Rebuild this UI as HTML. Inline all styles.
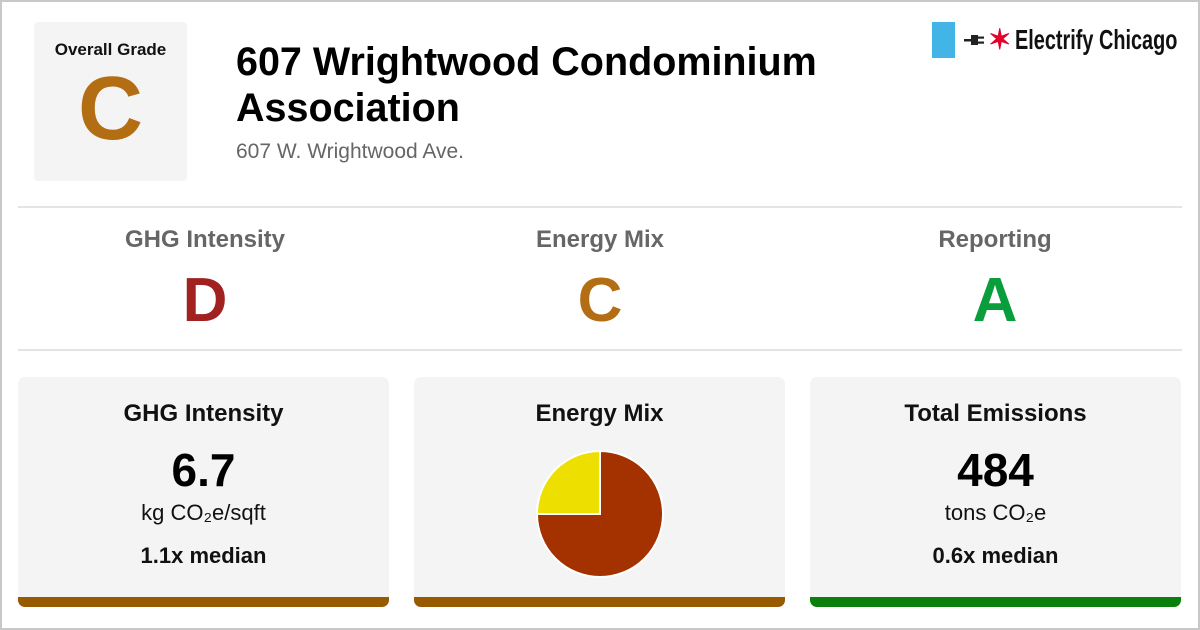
<!DOCTYPE html>
<html><head><style>
*{margin:0;padding:0;box-sizing:border-box}
body{width:1200px;height:630px;background:#fff;font-family:"Liberation Sans",Arial,sans-serif;position:relative;overflow:hidden}
.frame{position:absolute;left:0;top:0;width:1200px;height:630px;border:2px solid #c8c8c8}
.og{position:absolute;left:34px;top:22px;width:153px;height:159px;background:#f4f4f4;border-radius:4px;text-align:center}
.og .t{font-weight:bold;font-size:17px;margin-top:18px;color:#111}
.og .g{font-weight:bold;font-size:90px;color:#b36d12;line-height:90px;margin-top:4px}
h1{position:absolute;left:236px;top:39px;font-size:39.5px;line-height:46px;font-weight:bold;color:#000;width:660px}
.addr{position:absolute;left:236px;top:140px;font-size:21px;color:#666}
.logo{position:absolute;left:932px;top:22px;height:36px;display:flex;align-items:center}
.hr{position:absolute;left:18px;width:1164px;height:2px;background:#e4e4e4}
.gr{position:absolute;top:226px;width:300px;text-align:center}
.gr .t{font-size:24px;font-weight:bold;color:#666}
.gr .g{font-size:62px;font-weight:bold;line-height:70px;margin-top:12px}
.card{position:absolute;top:377px;width:371px;height:230px;background:#f4f4f4;border-radius:7px;overflow:hidden;text-align:center}
.card .bar{position:absolute;left:0;bottom:0;width:100%;height:10px}
.card .t{font-size:24px;font-weight:bold;margin-top:23px;color:#111}
.card .v{font-size:46px;font-weight:bold;line-height:50px;margin-top:17px}
.card .u{font-size:22px;color:#111;margin-top:5px}
.card .m{font-size:22px;font-weight:bold;color:#111;margin-top:17px}
</style></head><body>
<div class="frame"></div>
<div class="og"><div class="t">Overall Grade</div><div class="g">C</div></div>
<h1>607 Wrightwood Condominium Association</h1>
<div class="addr">607 W. Wrightwood Ave.</div>
<div class="logo">
<div style="width:23px;height:36px;background:#41b6e6"></div>
<svg width="26" height="16" viewBox="0 0 26 16" style="margin-left:9px"><rect x="0" y="7" width="8" height="2.5" fill="#222"/><path d="M7 3 h7 v10 h-7z" fill="#222"/><rect x="14" y="4.5" width="6" height="2.2" fill="#222"/><rect x="14" y="9.5" width="6" height="2.2" fill="#222"/></svg>
<span style="color:#e4002b;font-size:28px;line-height:26px;margin-left:-2px;font-weight:bold">✶</span>
<span style="font-size:28px;font-weight:bold;color:#111;margin-left:4px;transform:scaleX(0.71);transform-origin:left;display:inline-block;white-space:nowrap">Electrify Chicago</span>
</div>
<div class="hr" style="top:206px"></div>
<div class="hr" style="top:349px"></div>
<div class="gr" style="left:55px"><div class="t">GHG Intensity</div><div class="g" style="color:#a12121">D</div></div>
<div class="gr" style="left:450px"><div class="t">Energy Mix</div><div class="g" style="color:#b36d12">C</div></div>
<div class="gr" style="left:845px"><div class="t">Reporting</div><div class="g" style="color:#0a9d3c">A</div></div>
<div class="card" style="left:18px"><div class="t">GHG Intensity</div><div class="v">6.7</div><div class="u">kg CO₂e/sqft</div><div class="m">1.1x median</div><div class="bar" style="background:#975a00"></div></div>
<div class="card" style="left:414px"><div class="t">Energy Mix</div>
<svg width="130" height="130" viewBox="-65 -65 130 130" style="position:absolute;left:121px;top:72px">
<path d="M0 0 L0 -63 A63 63 0 1 1 -63 0 Z" fill="#a33200" stroke="#fff" stroke-width="2"/>
<path d="M0 0 L-63 0 A63 63 0 0 1 0 -63 Z" fill="#ede000" stroke="#fff" stroke-width="2"/>
</svg>
<div class="bar" style="background:#975a00"></div></div>
<div class="card" style="left:810px"><div class="t">Total Emissions</div><div class="v">484</div><div class="u">tons CO₂e</div><div class="m">0.6x median</div><div class="bar" style="background:#0b7f0b"></div></div>
</body></html>
